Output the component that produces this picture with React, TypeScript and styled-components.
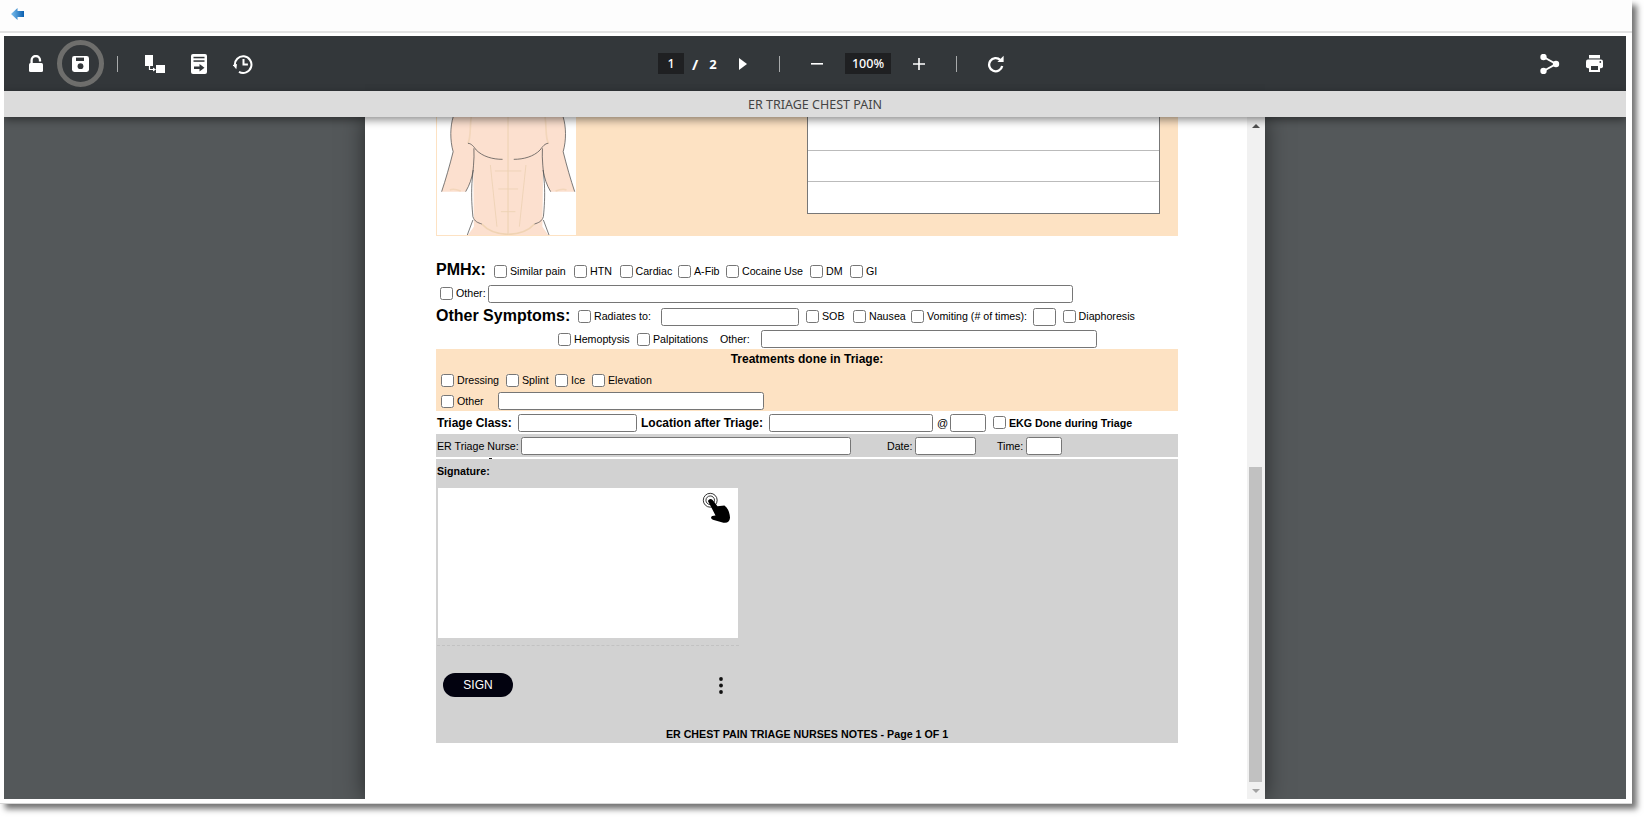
import React from "react";
import styled, { createGlobalStyle } from "styled-components";

const GlobalStyle = createGlobalStyle`
  html, body {
    margin: 0;
    padding: 0;
    background: #fff;
  }
  body {
    width: 1644px;
    height: 817px;
    overflow: hidden;
    font-family: "Liberation Sans", Arial, sans-serif;
  }
`;

const BackIcon = () => (
  <svg width="13" height="12" viewBox="0 0 13 12">
    <defs>
      <linearGradient id="backFill" x1="0" x2="1" y1="0" y2="0">
        <stop offset="0" stopColor="#7cc0ee" />
        <stop offset="1" stopColor="#0a5fb0" />
      </linearGradient>
    </defs>
    <path d="M0 6 6.5 0v3H13v6H6.5v3z" fill="url(#backFill)" />
  </svg>
);

const LockIcon = () => (
  <svg width="14" height="17" viewBox="0 0 14 17">
    <rect x="0" y="8" width="14" height="9" rx="1.5" fill="#fff" />
    <path d="M2.6 9V5.2a4.2 4.2 0 0 1 8.4 0V6.6" fill="none" stroke="#fff" strokeWidth="2.3" />
  </svg>
);

const SaveIcon = () => (
  <svg width="17" height="16" viewBox="0 0 17 16">
    <rect width="17" height="16" rx="2.4" fill="#fff" />
    <rect x="4" y="1.6" width="8" height="3.4" fill="#33373a" />
    <circle cx="8.5" cy="10.2" r="2.9" fill="#33373a" />
  </svg>
);

const FlowIcon = () => (
  <svg width="20" height="18" viewBox="0 0 20 18">
    <rect x="0" y="0" width="8" height="11" fill="#fff" />
    <rect x="11" y="10" width="9" height="8" fill="#fff" />
    <path d="M4.5 11v3.5H9" fill="none" stroke="#fff" strokeWidth="1.2" />
    <path d="M8 12.6 11 14.5 8 16.4z" fill="#fff" />
  </svg>
);

const ExportIcon = () => (
  <svg width="16" height="20" viewBox="0 0 16 20">
    <rect width="16" height="20" rx="2" fill="#fff" />
    <rect x="2.5" y="2.8" width="11" height="1.5" fill="#33373a" />
    <rect x="2.5" y="6.3" width="11" height="1.5" fill="#33373a" />
    <path d="M3 12.5h5.5V10l5 3.7-5 3.7v-2.5H3z" fill="#33373a" />
  </svg>
);

const HistoryIcon = () => (
  <svg width="20" height="20" viewBox="0 0 20 20">
    <path d="M6 17.8A8.3 8.3 0 1 0 1.9 11.5" fill="none" stroke="#fff" strokeWidth="2" />
    <path d="M0 10.5h4.4l-1.8 5z" fill="#fff" transform="rotate(-12 2 12)" />
    <path d="M10.5 5v5.4h4.4" fill="none" stroke="#fff" strokeWidth="2" />
  </svg>
);

const PlayIcon = () => (
  <svg width="8" height="12" viewBox="0 0 8 12">
    <path d="M0 0l8 6-8 6z" fill="#fff" />
  </svg>
);

const MinusIcon = () => (
  <svg width="12" height="2" viewBox="0 0 12 2">
    <rect width="12" height="1.6" fill="#fff" />
  </svg>
);

const PlusIcon = () => (
  <svg width="12" height="12" viewBox="0 0 12 12">
    <path d="M0 6h12M6 0v12" stroke="#fff" strokeWidth="1.6" />
  </svg>
);

const RefreshIcon = () => (
  <svg width="18" height="18" viewBox="0 0 18 18">
    <path d="M13.4 5A6.6 6.6 0 1 0 15.2 11" fill="none" stroke="#fff" strokeWidth="2.3" />
    <path d="M10.4 7H16.6V.8z" fill="#fff" />
  </svg>
);

const ShareIcon = () => (
  <svg width="20" height="20" viewBox="0 0 20 20">
    <path d="M3.5 3 16 10 3.5 17" fill="none" stroke="#fff" strokeWidth="2" />
    <circle cx="3.5" cy="3" r="3.2" fill="#fff" />
    <circle cx="3.5" cy="17" r="3.2" fill="#fff" />
    <circle cx="16" cy="10" r="3.2" fill="#fff" />
  </svg>
);

const PrintIcon = () => (
  <svg width="17" height="17" viewBox="0 0 17 17">
    <rect x="3" y="0" width="11" height="3.4" fill="#fff" />
    <rect x="0" y="4.6" width="17" height="8.6" rx="2" fill="#fff" />
    <rect x="3" y="9" width="11" height="8" fill="#fff" />
    <rect x="5" y="11" width="7" height="4" fill="#33373a" />
    <circle cx="14.3" cy="7" r="0.9" fill="#33373a" />
  </svg>
);

const TouchIcon = () => (
  <svg width="31" height="33" viewBox="845 97 92 100">
    <circle cx="872" cy="122" r="21" fill="none" stroke="#111" strokeWidth="2.6" />
    <circle cx="872" cy="122" r="13" fill="none" stroke="#111" strokeWidth="2.6" />
    <path
      d="M865 124Q871 113 880 122L894 140 915 138Q930 148 932 175 930 193 912 190L880 181Q870 176 878 170L888 168z"
      fill="#000"
    />
  </svg>
);

const KebabIcon = () => (
  <svg width="4" height="17" viewBox="0 0 4 17">
    <circle cx="2" cy="2" r="1.9" fill="#111" />
    <circle cx="2" cy="8.5" r="1.9" fill="#111" />
    <circle cx="2" cy="15" r="1.9" fill="#111" />
  </svg>
);

// one side of the chest chart, the other one is mirrored from it
const TorsoHalf = () => (
  <g>
    <path
      d="M95 21C86 50 85 90 95 125 85 165 72 210 60 245H133C145 225 152 205 156 180L158 350 140 375H262V21z"
      fill="#fce0cf"
    />
    <path d="M150 21C145 50 150 80 140 100M85 240C95 235 105 238 118 243" fill="none" stroke="#f3d6bb" strokeWidth="5" />
    <path d="M262 21V375M208 165 228 350M222 183H262M232 237H262M240 305H262" fill="none" stroke="#ecd0b2" strokeWidth="2.4" />
    <path d="M182 342C200 362 230 372 262 373" fill="none" stroke="#f0d3b3" strokeWidth="5" />
    <path
      d="M95 21C86 50 85 90 95 125 85 165 72 210 60 245M133 245C145 225 152 205 156 180M140 100C150 100 158 110 165 120 185 140 215 148 245 148M158 115C160 150 155 180 152 220 150 260 152 290 155 320 160 335 170 338 182 342M155 330 138 375"
      fill="none"
      stroke="#4a4a4a"
      strokeWidth="2.2"
    />
  </g>
);

const TorsoChart = () => (
  <svg width="140" height="118" viewBox="46 21 425 354" preserveAspectRatio="none">
    <TorsoHalf />
    <g transform="matrix(-1 0 0 1 524 0)">
      <TorsoHalf />
    </g>
  </svg>
);

const Page = styled.div`
  width: 1632px;
  height: 803px;
  display: flex;
  flex-direction: column;
  background: #fff;
  box-shadow: 5px 5px 6px rgba(0, 0, 0, 0.55);
  border-bottom: 1px solid #d8d8d8;
  box-sizing: content-box;
`;

const TopBar = styled.div`
  height: 33px;
  flex: none;
  display: flex;
  align-items: center;
  padding: 0 0 3px 11px;
  box-sizing: border-box;
  border-bottom: 2px solid #e2e2e2;
  background: #fdfdfd;
`;

const Viewer = styled.div`
  flex: 1;
  min-height: 0;
  display: flex;
  flex-direction: column;
  overflow: hidden;
  margin: 3px 6px 4px 4px;
`;

const Toolbar = styled.div`
  height: 55px;
  flex: none;
  display: flex;
  align-items: center;
  padding: 0 10px;
  background: #33373a;
  color: #fff;
`;

const Slot = styled.div<{ $w?: number; $ml?: number }>`
  width: ${(p) => p.$w ?? 44}px;
  margin-left: ${(p) => p.$ml ?? 0}px;
  height: 36px;
  flex: none;
  display: flex;
  align-items: center;
  justify-content: center;
`;

const SaveRing = styled.div`
  width: 47px;
  height: 47px;
  flex: none;
  box-sizing: border-box;
  border: 5px solid #6e6e6c;
  border-radius: 50%;
  display: flex;
  align-items: center;
  justify-content: center;
`;

const Divider = styled.span`
  width: 1px;
  height: 16px;
  background: #a8aaab;
`;

const DarkBox = styled.div<{ $w: number; $ml?: number }>`
  width: ${(p) => p.$w}px;
  margin-left: ${(p) => p.$ml ?? 0}px;
  height: 21px;
  flex: none;
  display: flex;
  align-items: center;
  justify-content: center;
  background: #1f2022;
  font: 500 12.5px "Noto Sans", sans-serif;
  color: #fff;
`;

const PageCount = styled.span<{ $size?: number }>`
  font: 700 ${(p) => p.$size ?? 13}px "Noto Sans", sans-serif;
  color: #fff;
  padding-top: 1px;
`;

const TitleBar = styled.div`
  height: 26px;
  flex: none;
  position: relative;
  z-index: 2;
  display: flex;
  align-items: center;
  justify-content: center;
  background: #dcdcdc;
  font: 400 12.5px "Noto Sans", sans-serif;
  color: #444;
  box-shadow: 0 3px 9px rgba(0, 0, 0, 0.45);
`;

const Workspace = styled.div`
  flex: 1;
  min-height: 0;
  display: flex;
  padding-left: 361px;
  background: #54585a;
`;

const Sheet = styled.div`
  width: 900px;
  display: flex;
  background: #fff;
  box-shadow: 0 0 22px rgba(0, 0, 0, 0.55);
`;

const SheetBody = styled.div`
  flex: 1;
  padding-left: 71px;
  overflow: hidden;
`;

const Scrollbar = styled.div`
  width: 18px;
  flex: none;
  display: flex;
  flex-direction: column;
  background: #f1f1f1;
`;

const ScrollButton = styled.div<{ $down?: boolean }>`
  height: 17px;
  flex: none;
  display: flex;
  align-items: center;
  justify-content: center;
  &::before {
    content: "";
    border-left: 4px solid transparent;
    border-right: 4px solid transparent;
    ${(p) =>
      p.$down
        ? "border-top: 4px solid #a3a3a3;"
        : "border-bottom: 4px solid #505050;"}
  }
`;

const ScrollThumb = styled.div`
  width: 13px;
  height: 315px;
  margin: auto 0 0 2px;
  background: #c1c1c1;
`;

const Form = styled.div`
  width: 742px;
  color: #000;
`;

const BodyPanel = styled.div`
  height: 119px;
  display: flex;
  background: #fde2c3;
`;

const ChartBox = styled.div`
  width: 141px;
  height: 119px;
  flex: none;
  box-sizing: border-box;
  border: 1px solid #fde2c3;
  border-top: 0;
  background: #fff;
  line-height: 0;
`;

const PainTable = styled.div`
  width: 353px;
  height: 97px;
  margin-left: 230px;
  box-sizing: border-box;
  display: grid;
  grid-template-rows: 34px 31px 31px;
  border: 1px solid #777;
  border-top: 0;
  background: #fff;
`;

const PainRow = styled.div`
  border-bottom: 1px solid #bbb;
  &:last-child {
    border-bottom: 0;
  }
`;

const Row = styled.div<{ $h: number; $pl?: number; $mt?: number }>`
  height: ${(p) => p.$h}px;
  margin-top: ${(p) => p.$mt ?? 0}px;
  padding-left: ${(p) => p.$pl ?? 0}px;
  display: flex;
  align-items: center;
  flex: none;
  white-space: nowrap;
`;

const Heading = styled.span<{ $w: number }>`
  width: ${(p) => p.$w}px;
  flex: none;
  font-size: 16px;
  font-weight: 700;
  position: relative;
  top: -1px;
`;

const Item = styled.label<{ $w?: number; $ml?: number; $raised?: boolean }>`
  width: ${(p) => (p.$w ? `${p.$w}px` : "auto")};
  margin-left: ${(p) => p.$ml ?? 0}px;
  margin-bottom: ${(p) => (p.$raised ? 2 : 0)}px;
  flex: none;
  display: flex;
  align-items: center;
  font-size: 10.67px;
`;

const Check = styled.input.attrs({ type: "checkbox" })`
  width: 13px;
  height: 13px;
  margin: 0 3px 0 0;
  flex: none;
`;

const Field = styled.input.attrs({ type: "text" })<{ $w: number; $ml?: number }>`
  width: ${(p) => p.$w}px;
  height: 18px;
  margin: 0 0 0 ${(p) => p.$ml ?? 0}px;
  padding: 0;
  flex: none;
  box-sizing: border-box;
  border: 1px solid #767676;
  border-radius: 2.5px;
  background: #fff;
`;

const Plain = styled.span<{ $w?: number; $ml?: number; $size?: number }>`
  width: ${(p) => (p.$w ? `${p.$w}px` : "auto")};
  margin-left: ${(p) => p.$ml ?? 0}px;
  flex: none;
  font-size: ${(p) => p.$size ?? 10.67}px;
`;

const Bold = styled.span<{ $w?: number; $ml?: number; $size?: number }>`
  width: ${(p) => (p.$w ? `${p.$w}px` : "auto")};
  margin-left: ${(p) => p.$ml ?? 0}px;
  flex: none;
  font-size: ${(p) => p.$size ?? 12}px;
  font-weight: 700;
`;

const TreatmentBlock = styled.div`
  height: 62px;
  display: flex;
  flex-direction: column;
  background: #fde2c3;
`;

const BlockTitle = styled.div`
  height: 20px;
  display: flex;
  align-items: center;
  justify-content: center;
  font-size: 12px;
  font-weight: 700;
`;

const NurseWrap = styled.div`
  position: relative;
`;

const GrayRow = styled(Row)`
  background: #d2d2d2;
`;

const InkSpeck = styled.span`
  position: absolute;
  left: 53px;
  bottom: -2px;
  width: 3px;
  height: 1px;
  background: #222;
`;

const SignPanel = styled.div`
  height: 284px;
  margin-top: 2px;
  display: flex;
  flex-direction: column;
  background: #d2d2d2;
`;

const SignLabel = styled.div`
  height: 24px;
  padding-left: 1px;
  display: flex;
  align-items: center;
  font-size: 10.67px;
  font-weight: 700;
`;

const SignBox = styled.div`
  position: relative;
  width: 300px;
  height: 150px;
  margin: 5px 0 0 2px;
  background: #fff;
`;

const TouchHint = styled.span`
  position: absolute;
  top: 4px;
  right: 6px;
  line-height: 0;
`;

const SignLine = styled.div`
  width: 302px;
  margin: 7px 0 0 1px;
  border-top: 1px dashed #c2c2c2;
`;

const SignActions = styled.div`
  width: 280px;
  margin: 27px 0 0 7px;
  display: flex;
  align-items: center;
  justify-content: space-between;
`;

const SignButton = styled.button`
  width: 70px;
  height: 24px;
  padding: 0;
  border: 0;
  border-radius: 12px;
  background: #02020f;
  color: #fff;
  font: 400 12px "Liberation Sans", Arial, sans-serif;
`;

const FootNote = styled.div`
  margin-top: auto;
  padding-bottom: 2px;
  text-align: center;
  font-size: 10.67px;
  line-height: 14px;
  font-weight: 700;
`;

export default function App() {
  return (
    <>
      <GlobalStyle />
      <Page>
        <TopBar>
          <BackIcon />
        </TopBar>
        <Viewer>
          <Toolbar>
            <Slot><LockIcon /></Slot>
            <Slot><SaveRing><SaveIcon /></SaveRing></Slot>
            <Slot $w={31}><Divider /></Slot>
            <Slot><FlowIcon /></Slot>
            <Slot><ExportIcon /></Slot>
            <Slot><HistoryIcon /></Slot>
            <DarkBox $w={26} $ml={393}>1</DarkBox>
            <Slot $w={18} $ml={2}><PageCount $size={15}>/</PageCount></Slot>
            <Slot $w={18}><PageCount>2</PageCount></Slot>
            <Slot $w={41}><PlayIcon /></Slot>
            <Slot $w={32}><Divider /></Slot>
            <Slot><MinusIcon /></Slot>
            <DarkBox $w={46} $ml={6}>100%</DarkBox>
            <Slot $w={56}><PlusIcon /></Slot>
            <Slot $w={18}><Divider /></Slot>
            <Slot $w={62}><RefreshIcon /></Slot>
            <Slot $ml={501}><ShareIcon /></Slot>
            <Slot><PrintIcon /></Slot>
          </Toolbar>
          <TitleBar>ER TRIAGE CHEST PAIN</TitleBar>
          <Workspace>
            <Sheet>
              <SheetBody>
                <Form>
                  <BodyPanel>
                    <ChartBox><TorsoChart /></ChartBox>
                    <PainTable>
                      <PainRow />
                      <PainRow />
                      <PainRow />
                    </PainTable>
                  </BodyPanel>

                  <Row $h={24} $mt={23}>
                    <Heading $w={58}>PMHx:</Heading>
                    <Item $w={80}><Check />Similar pain</Item>
                    <Item $w={45.5}><Check />HTN</Item>
                    <Item $w={58.5}><Check />Cardiac</Item>
                    <Item $w={48}><Check />A-Fib</Item>
                    <Item $w={84}><Check />Cocaine Use</Item>
                    <Item $w={40}><Check />DM</Item>
                    <Item><Check />GI</Item>
                  </Row>
                  <Row $h={22} $pl={4}>
                    <Item $w={48} $raised><Check />Other:</Item>
                    <Field $w={585} />
                  </Row>
                  <Row $h={24}>
                    <Heading $w={142}>Other Symptoms:</Heading>
                    <Item $w={83} $raised><Check />Radiates to:</Item>
                    <Field $w={138} />
                    <Item $w={47} $ml={7} $raised><Check />SOB</Item>
                    <Item $w={58} $raised><Check />Nausea</Item>
                    <Item $raised><Check />Vomiting (# of times):</Item>
                    <Field $w={23} $ml={5.5} />
                    <Item $ml={7} $raised><Check />Diaphoresis</Item>
                  </Row>
                  <Row $h={20} $pl={122}>
                    <Item $w={79}><Check />Hemoptysis</Item>
                    <Item $w={83}><Check />Palpitations</Item>
                    <Plain $w={41}>Other:</Plain>
                    <Field $w={336} />
                  </Row>

                  <TreatmentBlock>
                    <BlockTitle>Treatments done in Triage:</BlockTitle>
                    <Row $h={22} $pl={5}>
                      <Item $w={65}><Check />Dressing</Item>
                      <Item $w={49}><Check />Splint</Item>
                      <Item $w={37}><Check />Ice</Item>
                      <Item><Check />Elevation</Item>
                    </Row>
                    <Row $h={20} $pl={5}>
                      <Item $w={57}><Check />Other</Item>
                      <Field $w={266} />
                    </Row>
                  </TreatmentBlock>

                  <Row $h={23} $pl={1}>
                    <Bold $w={81}>Triage Class:</Bold>
                    <Field $w={119} />
                    <Bold $w={128} $ml={4}>Location after Triage:</Bold>
                    <Field $w={164} />
                    <Plain $w={13} $ml={4} $size={11}>@</Plain>
                    <Field $w={36} />
                    <Item $ml={7}><Check /><Bold $size={10.67}>EKG Done during Triage</Bold></Item>
                  </Row>
                  <NurseWrap>
                    <GrayRow $h={23} $pl={1}>
                      <Plain $w={84}>ER Triage Nurse:</Plain>
                      <Field $w={330} />
                      <Plain $w={28} $ml={36}>Date:</Plain>
                      <Field $w={61} />
                      <Plain $w={29} $ml={21}>Time:</Plain>
                      <Field $w={36} />
                    </GrayRow>
                    <InkSpeck />
                  </NurseWrap>

                  <SignPanel>
                    <SignLabel>Signature:</SignLabel>
                    <SignBox>
                      <TouchHint><TouchIcon /></TouchHint>
                    </SignBox>
                    <SignLine />
                    <SignActions>
                      <SignButton>SIGN</SignButton>
                      <KebabIcon />
                    </SignActions>
                    <FootNote>ER CHEST PAIN TRIAGE NURSES NOTES - Page 1 OF 1</FootNote>
                  </SignPanel>
                </Form>
              </SheetBody>
              <Scrollbar>
                <ScrollButton />
                <ScrollThumb />
                <ScrollButton $down />
              </Scrollbar>
            </Sheet>
          </Workspace>
        </Viewer>
      </Page>
    </>
  );
}
